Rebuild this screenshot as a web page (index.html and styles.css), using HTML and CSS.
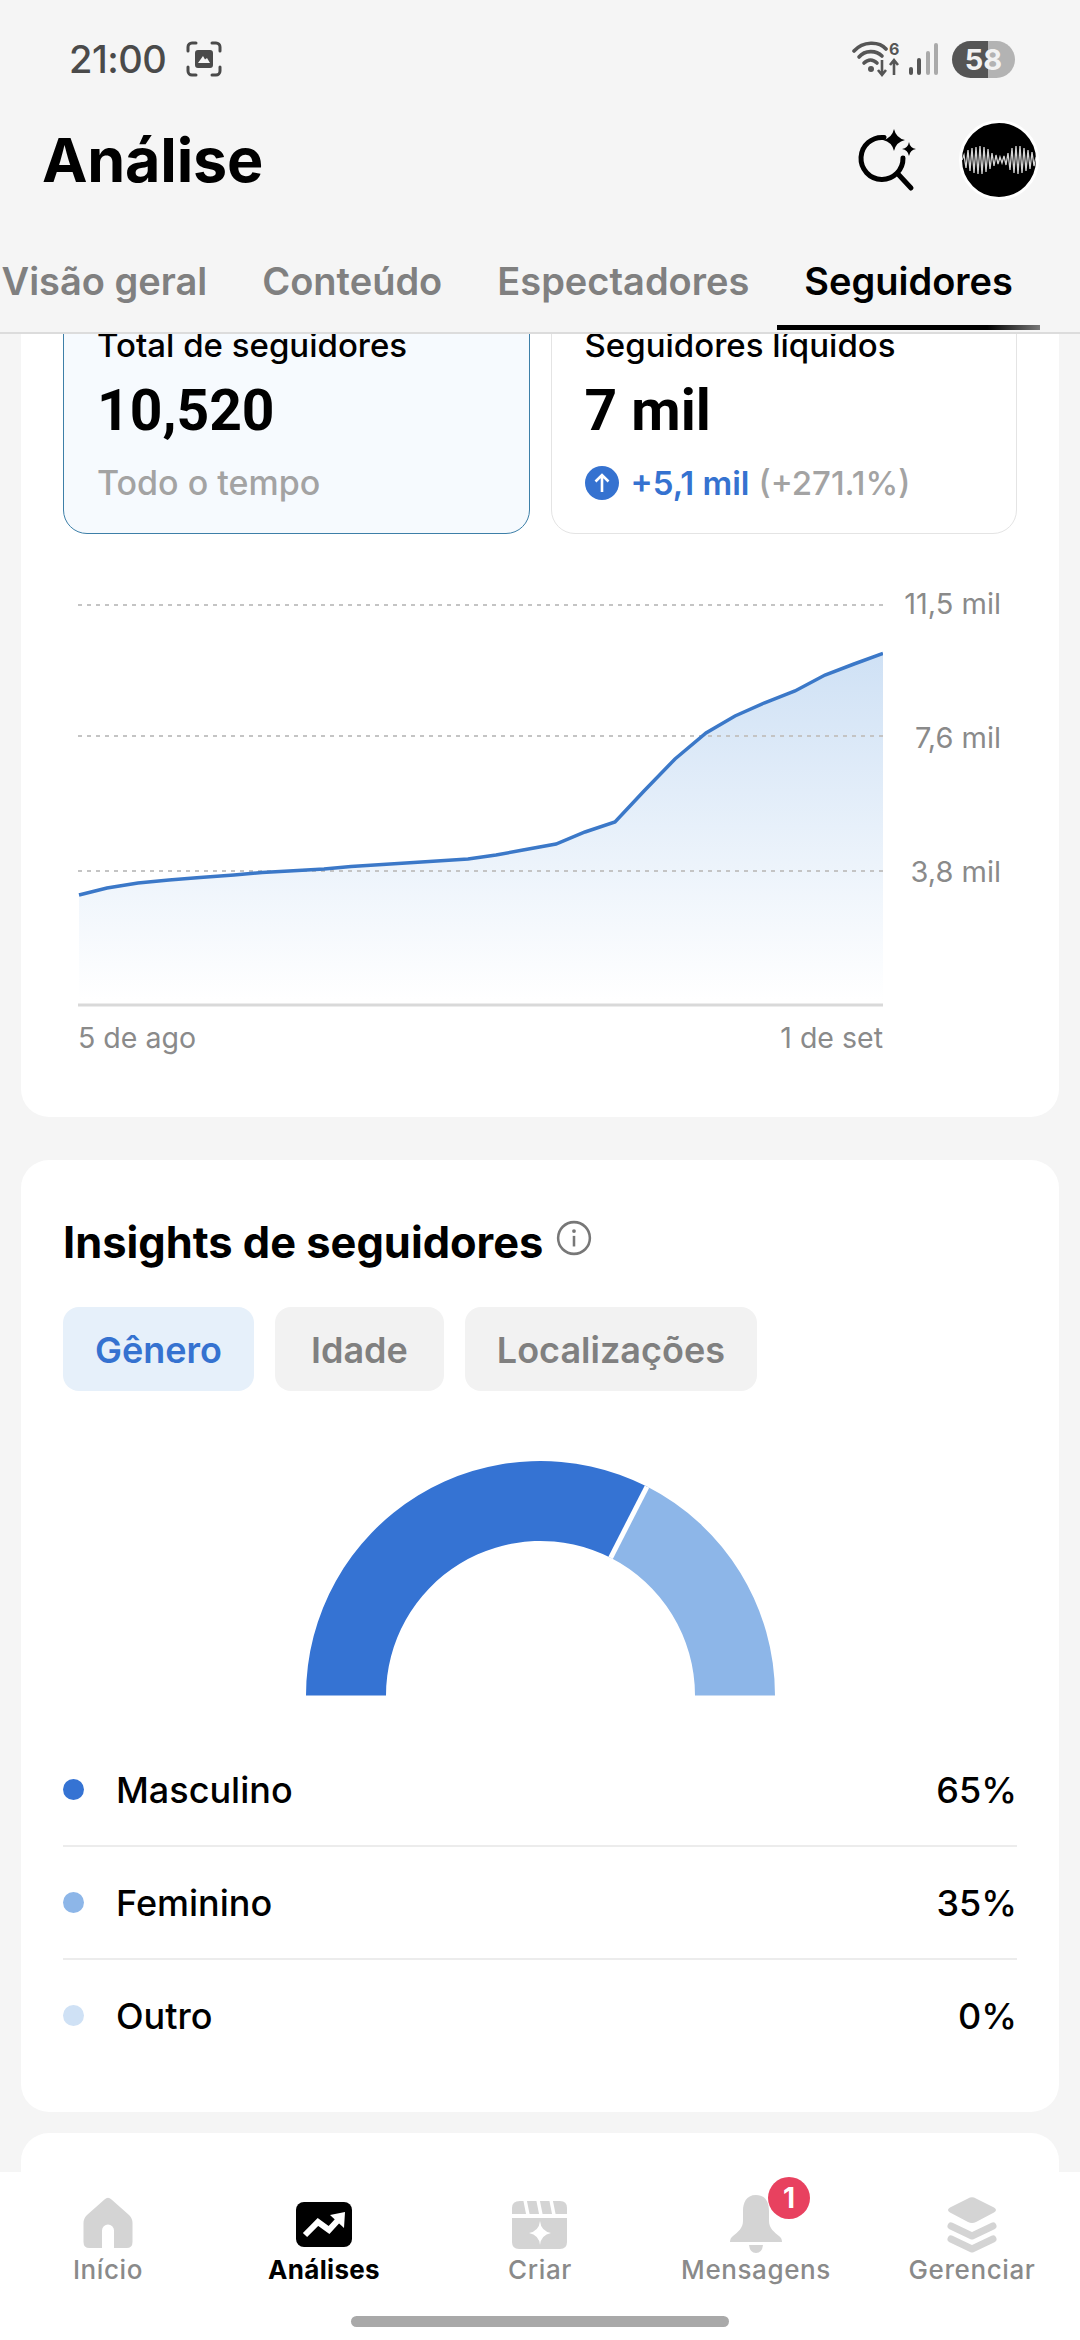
FILE: index.html
```html
<!DOCTYPE html>
<html lang="pt">
<head>
<meta charset="utf-8">
<title>Análise</title>
<link rel="stylesheet" href="styles.css">
</head>
<body>
<div class="app">
  <header class="top">
    <div class="status">
      <div class="status-left">
        <span class="time">21:00</span>
        <svg class="shot" viewBox="0 0 36 36"><path d="M2 10V6a4 4 0 0 1 4-4h4M26 2h4a4 4 0 0 1 4 4v4M34 26v4a4 4 0 0 1-4 4h-4M10 34H6a4 4 0 0 1-4-4v-4" fill="none" stroke="#4a4a4a" stroke-width="3" stroke-linecap="round"/><path fill-rule="evenodd" d="M12 9h12a3 3 0 0 1 3 3v12a3 3 0 0 1-3 3H12a3 3 0 0 1-3-3V12a3 3 0 0 1 3-3zM12 22h12l-3-5-2 1.5-2-3.5z" fill="#4a4a4a"/></svg>
      </div>
      <div class="status-right">
        <svg class="wifi" viewBox="0 0 50 38"><g fill="none" stroke="#555" stroke-width="3.6" stroke-linecap="round"><path d="M2 11C11 1 27 1 34 9"/><path d="M7 17C13 10 24 10 30 16"/><path d="M12 23C16 19 21 19 25 23"/></g><circle cx="19" cy="29" r="3" fill="#555"/><text class="wifi-six" x="37" y="15">6</text><path d="M30 20v15M26 30l4 5 4-5M42 35V20M38 25l4-5 4 5" fill="none" stroke="#555" stroke-width="2.6"/></svg>
        <svg class="signal" viewBox="0 0 30 33"><rect x="1" y="24" width="4" height="8" rx="2" fill="#555"/><rect x="9" y="15" width="4" height="17" rx="2" fill="#555"/><rect x="18" y="8" width="4" height="24" rx="2" fill="#aaa"/><rect x="26" y="0" width="4" height="32" rx="2" fill="#aaa"/></svg>
        <span class="battery">58</span>
      </div>
    </div>
    <div class="titlebar">
      <h1 class="title">Análise</h1>
      <div class="title-actions">
        <svg class="search" viewBox="850 125 70 68"><path d="M883 136.500A21 21 0 1 0 902 157" fill="none" stroke="#000" stroke-width="5" stroke-linecap="round"/><path d="M897 173L910 187" stroke="#000" stroke-width="5" stroke-linecap="round"/><path d="M893 128Q895 137 904 139Q895 141 893 150Q891 141 882 139Q891 137 893 128Z" fill="#000"/><path d="M908 141Q909 147 915 148Q909 149 908 155Q907 149 901 148Q907 147 908 141Z" fill="#000"/></svg>
        <div class="avatar">
          <svg class="wave" viewBox="0 0 74 74"><polyline points="0,37 2,32 4,45 6,27 8,48 10,25 12,50 14,24 16,51 18,23 20,51 22,24 24,49 26,26 28,46 30,30 32,43 34,32 36,41 38,34 40,40 42,33 44,42 46,30 48,47 50,25 52,50 54,23 56,51 58,23 60,50 62,25 64,48 66,27 68,46 70,29 72,43 74,34" fill="none" stroke="#d6d6d6" stroke-width="1.3"/></svg>
        </div>
      </div>
    </div>
    <nav class="tabs">
      <span class="tab">Visão geral</span>
      <span class="tab">Conteúdo</span>
      <span class="tab">Espectadores</span>
      <span class="tab tab-active">Seguidores</span>
    </nav>
  </header>

  <main class="scroller">
    <section class="card card-overview">
      <div class="stats">
        <div class="stat stat-active">
          <div class="stat-label">Total de seguidores</div>
          <div class="stat-value">10,520</div>
          <div class="stat-sub">Todo o tempo</div>
        </div>
        <div class="stat">
          <div class="stat-label">Seguidores líquidos</div>
          <div class="stat-value">7 mil</div>
          <div class="stat-trend">
            <svg class="trend-icon" viewBox="0 0 34 34"><circle cx="17" cy="17" r="17" fill="#3572d0"/><path d="M17 26V9M10.500 15.500L17 9l6.500 6.500" fill="none" stroke="#fff" stroke-width="2.600"/></svg>
            <span class="trend-up">+5,1 mil</span>
            <span class="trend-pct">(+271.1%)</span>
          </div>
        </div>
      </div>
      <div class="chart">
        <div class="chart-main">
          <svg class="plot" viewBox="78 586 805 422">
            <defs>
              <linearGradient id="areaFill" x1="0" y1="0" x2="0" y2="1">
                <stop offset="0" stop-color="#cfe1f5"/>
                <stop offset="1" stop-color="#ffffff"/>
              </linearGradient>
            </defs>
            <path d="M79 895L107 888L138 883L169 880L200 877.500L234 875L262 872.500L289 871L324 869L351 866.500L406 863L468 859L496 855L523 850L556 844L585 832L615 822L644 791L675 759L706 733L735 716L764 703L795 691L825 675L854 664L883 653.500V1000H79Z" fill="url(#areaFill)"/>
            <g stroke="#c4c4c4" stroke-width="2" stroke-dasharray="4 5">
              <line x1="78" y1="605" x2="883" y2="605"/>
              <line x1="78" y1="736" x2="883" y2="736"/>
              <line x1="78" y1="871" x2="883" y2="871"/>
            </g>
            <polyline points="79,895 107,888 138,883 169,880 200,877.500 234,875 262,872.500 289,871 324,869 351,866.500 406,863 468,859 496,855 523,850 556,844 585,832 615,822 644,791 675,759 706,733 735,716 764,703 795,691 825,675 854,664 883,653.500" fill="none" stroke="#3b78c8" stroke-width="3.500"/>
            <rect x="78" y="1003.500" width="805" height="3" fill="#d9d9d9"/>
          </svg>
          <div class="x-axis"><span>5 de ago</span><span>1 de set</span></div>
        </div>
        <div class="y-axis"><span>11,5 mil</span><span>7,6 mil</span><span>3,8 mil</span></div>
      </div>
    </section>

    <section class="card card-insights">
      <div class="insights-head">
        <h2 class="insights-title">Insights de seguidores</h2>
        <svg class="info" viewBox="0 0 34 34"><circle cx="17" cy="17" r="15" fill="none" stroke="#777" stroke-width="2.400"/><circle cx="17" cy="10.500" r="1.800" fill="#777"/><rect x="15.800" y="15" width="2.400" height="10" fill="#777"/></svg>
      </div>
      <div class="chips">
        <span class="chip chip-active">Gênero</span>
        <span class="chip chip-short">Idade</span>
        <span class="chip">Localizações</span>
      </div>
      <svg class="donut" viewBox="300 1458 480 240">
        <path d="M306 1694.500A234.500 234.500 0 0 1 647 1485.600L610.600 1556.800A154.500 154.500 0 0 0 386 1694.500Z" fill="#3573d3"/>
        <path d="M647 1485.600A234.500 234.500 0 0 1 775 1694.500H695A154.500 154.500 0 0 0 610.600 1556.800Z" fill="#8db6e8"/>
        <line x1="610.600" y1="1556.800" x2="647" y2="1485.600" stroke="#fff" stroke-width="5"/>
      </svg>
      <ul class="legend">
        <li class="legend-row"><span class="dot dot-male"></span><span class="legend-name">Masculino</span><span class="legend-pct">65%</span></li>
        <li class="legend-row"><span class="dot dot-female"></span><span class="legend-name">Feminino</span><span class="legend-pct">35%</span></li>
        <li class="legend-row"><span class="dot dot-other"></span><span class="legend-name">Outro</span><span class="legend-pct">0%</span></li>
      </ul>
    </section>

    <section class="card card-next"></section>
  </main>

  <footer class="bottom">
    <nav class="nav">
      <div class="nav-item">
        <svg class="nav-icon" viewBox="0 0 60 58"><path d="M26.500 4.500Q30 1 33.500 4.500L51 20Q54.500 23.500 54.500 28V47Q54.500 53 48.500 53H36V35.500A6 6 0 0 0 24 35.500V53H11.500Q5.500 53 5.500 47V28Q5.500 23.500 9 20Z" fill="#d4d4d4"/></svg>
        <span class="nav-label">Início</span>
      </div>
      <div class="nav-item nav-active">
        <svg class="nav-icon" viewBox="0 0 60 58"><rect x="2" y="7" width="56" height="45" rx="8" fill="#000"/><path d="M11 40L24 27L35 35L46 23" fill="none" stroke="#fff" stroke-width="6"/><path d="M51 17L50 33L36 20Z" fill="#fff"/></svg>
        <span class="nav-label">Análises</span>
      </div>
      <div class="nav-item">
        <svg class="nav-icon" viewBox="0 0 60 58"><path d="M10 6H50Q57 6 57 13V19H2V13Q2 6 10 6Z" fill="#d4d4d4"/><path d="M15 5L18 20M28 5L31 20M41 5L44 20" stroke="#fff" stroke-width="3.500"/><path d="M2 23H57V47Q57 54 50 54H9Q2 54 2 47Z" fill="#d4d4d4"/><path d="M30 26Q31 36 41 38Q31 40 30 50Q29 40 19 38Q29 36 30 26Z" fill="#fff"/></svg>
        <span class="nav-label">Criar</span>
      </div>
      <div class="nav-item">
        <svg class="nav-icon" viewBox="0 0 60 58"><path d="M30 0C20 0 17 8 17 16V26C17 33 12 37 7 41Q4 43 4 47H56Q56 43 53 41C48 37 43 33 43 26V16C43 8 40 0 30 0Z" fill="#d4d4d4"/><path d="M23 50H37Q36 58 30 58Q24 58 23 50Z" fill="#d4d4d4"/></svg>
        <span class="nav-label">Mensagens</span>
        <span class="badge">1</span>
      </div>
      <div class="nav-item">
        <svg class="nav-icon" viewBox="0 0 60 58"><path d="M26 3.500Q30 1 34 3.500L52 12.500Q56 15 52 17.500L34 27Q30 29 26 27L8 17.500Q4 15 8 12.500Z" fill="#d4d4d4"/><path d="M9 31L30 41L51 31M9 44L30 54L51 44" fill="none" stroke="#d4d4d4" stroke-width="7" stroke-linecap="round" stroke-linejoin="round"/></svg>
        <span class="nav-label">Gerenciar</span>
      </div>
    </nav>
    <div class="homebar"></div>
  </footer>
</div>
</body>
</html>
```

FILE: styles.css
```css
* { box-sizing: border-box; }
html, body { margin: 0; padding: 0; }
body { font-family: Inter, "Noto Sans", "Liberation Sans", sans-serif; background: #f5f5f5; color: #000; }
.app { width: 1080px; height: 2340px; display: flex; flex-direction: column; overflow: hidden; background: #f5f5f5; }

.top { flex: none; height: 334px; display: flex; flex-direction: column; background: #f5f5f5; }
.status { height: 46px; margin-top: 36px; padding: 0 65px 0 69px; display: flex; align-items: center; justify-content: space-between; }
.status-left { display: flex; align-items: center; gap: 20px; }
.time { font-size: 38px; font-weight: 500; color: #4a4a4a; line-height: 46px; letter-spacing: -0.5px; }
.shot { width: 36px; height: 36px; }
.status-right { display: flex; align-items: center; }
.wifi { width: 50px; height: 38px; }
.wifi-six { font-size: 16px; font-weight: 700; fill: #555; }
.signal { width: 30px; height: 33px; margin-left: 6px; }
.battery { width: 63px; height: 37px; margin-left: 14px; border-radius: 19px; background: linear-gradient(90deg, #555 57%, #b3b3b3 57%); color: #f2f2f2; font-size: 29px; font-weight: 700; line-height: 37px; text-align: center; }

.titlebar { height: 76px; margin-top: 40px; padding: 0 41px 0 42px; display: flex; align-items: center; justify-content: space-between; }
.title { margin: 0; font-size: 61px; line-height: 76px; font-weight: 700; letter-spacing: -0.2px; }
.title-actions { display: flex; align-items: center; gap: 38px; }
.search { width: 70px; height: 68px; }
.avatar { width: 80px; height: 80px; border-radius: 50%; background: #000; border: 3px solid #fff; display: flex; align-items: center; justify-content: center; overflow: hidden; }
.wave { width: 74px; height: 74px; }

.tabs { flex: 1; padding-top: 58px; margin-left: -26px; display: flex; align-items: flex-start; border-bottom: 2px solid #dcdcdc; white-space: nowrap; }
.tab { position: relative; padding: 0 27.5px; font-size: 38px; line-height: 50px; font-weight: 600; color: #808080; height: 74px; }
.tab-active { color: #000; }
.tab-active::after { content: ""; position: absolute; left: 0; right: 0; bottom: 0; height: 5px; background: linear-gradient(90deg, #000 80%, #777 100%); }

.scroller { flex: 1; min-height: 0; overflow: hidden; padding: 0 21px; display: flex; flex-direction: column; }
.card { flex: none; background: #fff; border-radius: 28px; padding: 0 42px; }
.card-overview { margin-top: -60px; height: 843px; padding-top: 26px; margin-bottom: 43px; }
.stats { display: flex; gap: 21px; }
.stat { flex: 1; height: 234px; padding: 24px 33px 0; border: 1.5px solid #e4e4e4; border-radius: 24px; background: #fff; }
.stat-active { background: #f6fafe; border-color: #3d7fa8; }
.stat-label { font-size: 33px; font-weight: 500; line-height: 40px; }
.stat-value { font-family: Roboto, Inter, sans-serif; font-size: 57px; font-weight: 700; line-height: 68px; margin-top: 12px; }
.stat-sub { font-size: 34px; font-weight: 500; line-height: 40px; margin-top: 18px; color: #a3a3a3; }
.stat-trend { display: flex; align-items: center; margin-top: 18px; height: 40px; font-size: 33px; font-weight: 500; }
.trend-icon { width: 34px; height: 34px; margin-right: 12px; }
.trend-up { color: #3572d0; font-weight: 600; margin-right: 9px; }
.trend-pct { color: #a3a3a3; }

.chart { display: flex; margin: 52px 16px 0 15px; }
.chart-main { width: 805px; flex: none; }
.plot { display: block; width: 805px; height: 422px; }
.x-axis { display: flex; justify-content: space-between; margin-top: 12px; font-size: 28.5px; line-height: 36px; color: #8a8a8a; }
.y-axis { flex: 1; height: 304px; display: flex; flex-direction: column; justify-content: space-between; align-items: flex-end; font-size: 29px; line-height: 36px; color: #8a8a8a; }

.card-insights { height: 952px; padding-top: 56px; }
.insights-head { display: flex; align-items: center; gap: 13px; height: 52px; }
.insights-title { margin: 0; font-size: 43.4px; line-height: 52px; font-weight: 700; }
.info { width: 36px; height: 36px; margin-top: -8px; }
.chips { display: flex; gap: 21px; margin-top: 39px; }
.chip { height: 84px; padding: 0 32px; border-radius: 16px; background: #f2f2f2; color: #808080; font-size: 36px; font-weight: 600; line-height: 86px; }
.chip-short { padding: 0 36px; }
.chip-active { background: #e6f0fa; color: #3572d0; }
.donut { display: block; width: 480px; height: 240px; margin: 68px auto 0; }
.legend { list-style: none; margin: 35px 0 0; padding: 0; }
.legend-row { display: flex; align-items: center; height: 113px; border-bottom: 2px solid #ececec; font-size: 36px; font-weight: 500; }
.legend-row:last-child { border-bottom-color: transparent; }
.dot { width: 21px; height: 21px; border-radius: 50%; margin-right: 32px; }
.dot-male { background: #3573d3; }
.dot-female { background: #8db6e8; }
.dot-other { background: #cfe1f5; }
.legend-name { flex: 1; }

.card-next { margin-top: 21px; height: 300px; }

.bottom { flex: none; height: 168px; background: #fff; display: flex; flex-direction: column; }
.nav { display: grid; grid-template-columns: repeat(5, 216px); padding-top: 23px; }
.nav-item { position: relative; display: flex; flex-direction: column; align-items: center; }
.nav-icon { display: block; width: 60px; height: 58px; }
.nav-label { font-size: 26px; line-height: 34px; font-weight: 500; color: #8a8a8a; letter-spacing: 0.6px; white-space: nowrap; }
.nav-active .nav-label { color: #000; font-weight: 700; letter-spacing: 0.3px; }
.badge { position: absolute; left: 120px; top: -18px; width: 42px; height: 42px; border-radius: 50%; background: #e8415f; color: #fff; font-size: 28px; font-weight: 700; line-height: 42px; text-align: center; }
.homebar { width: 378px; height: 11px; margin: 29px auto 0; border-radius: 6px; background: #a9a9a9; }
```
